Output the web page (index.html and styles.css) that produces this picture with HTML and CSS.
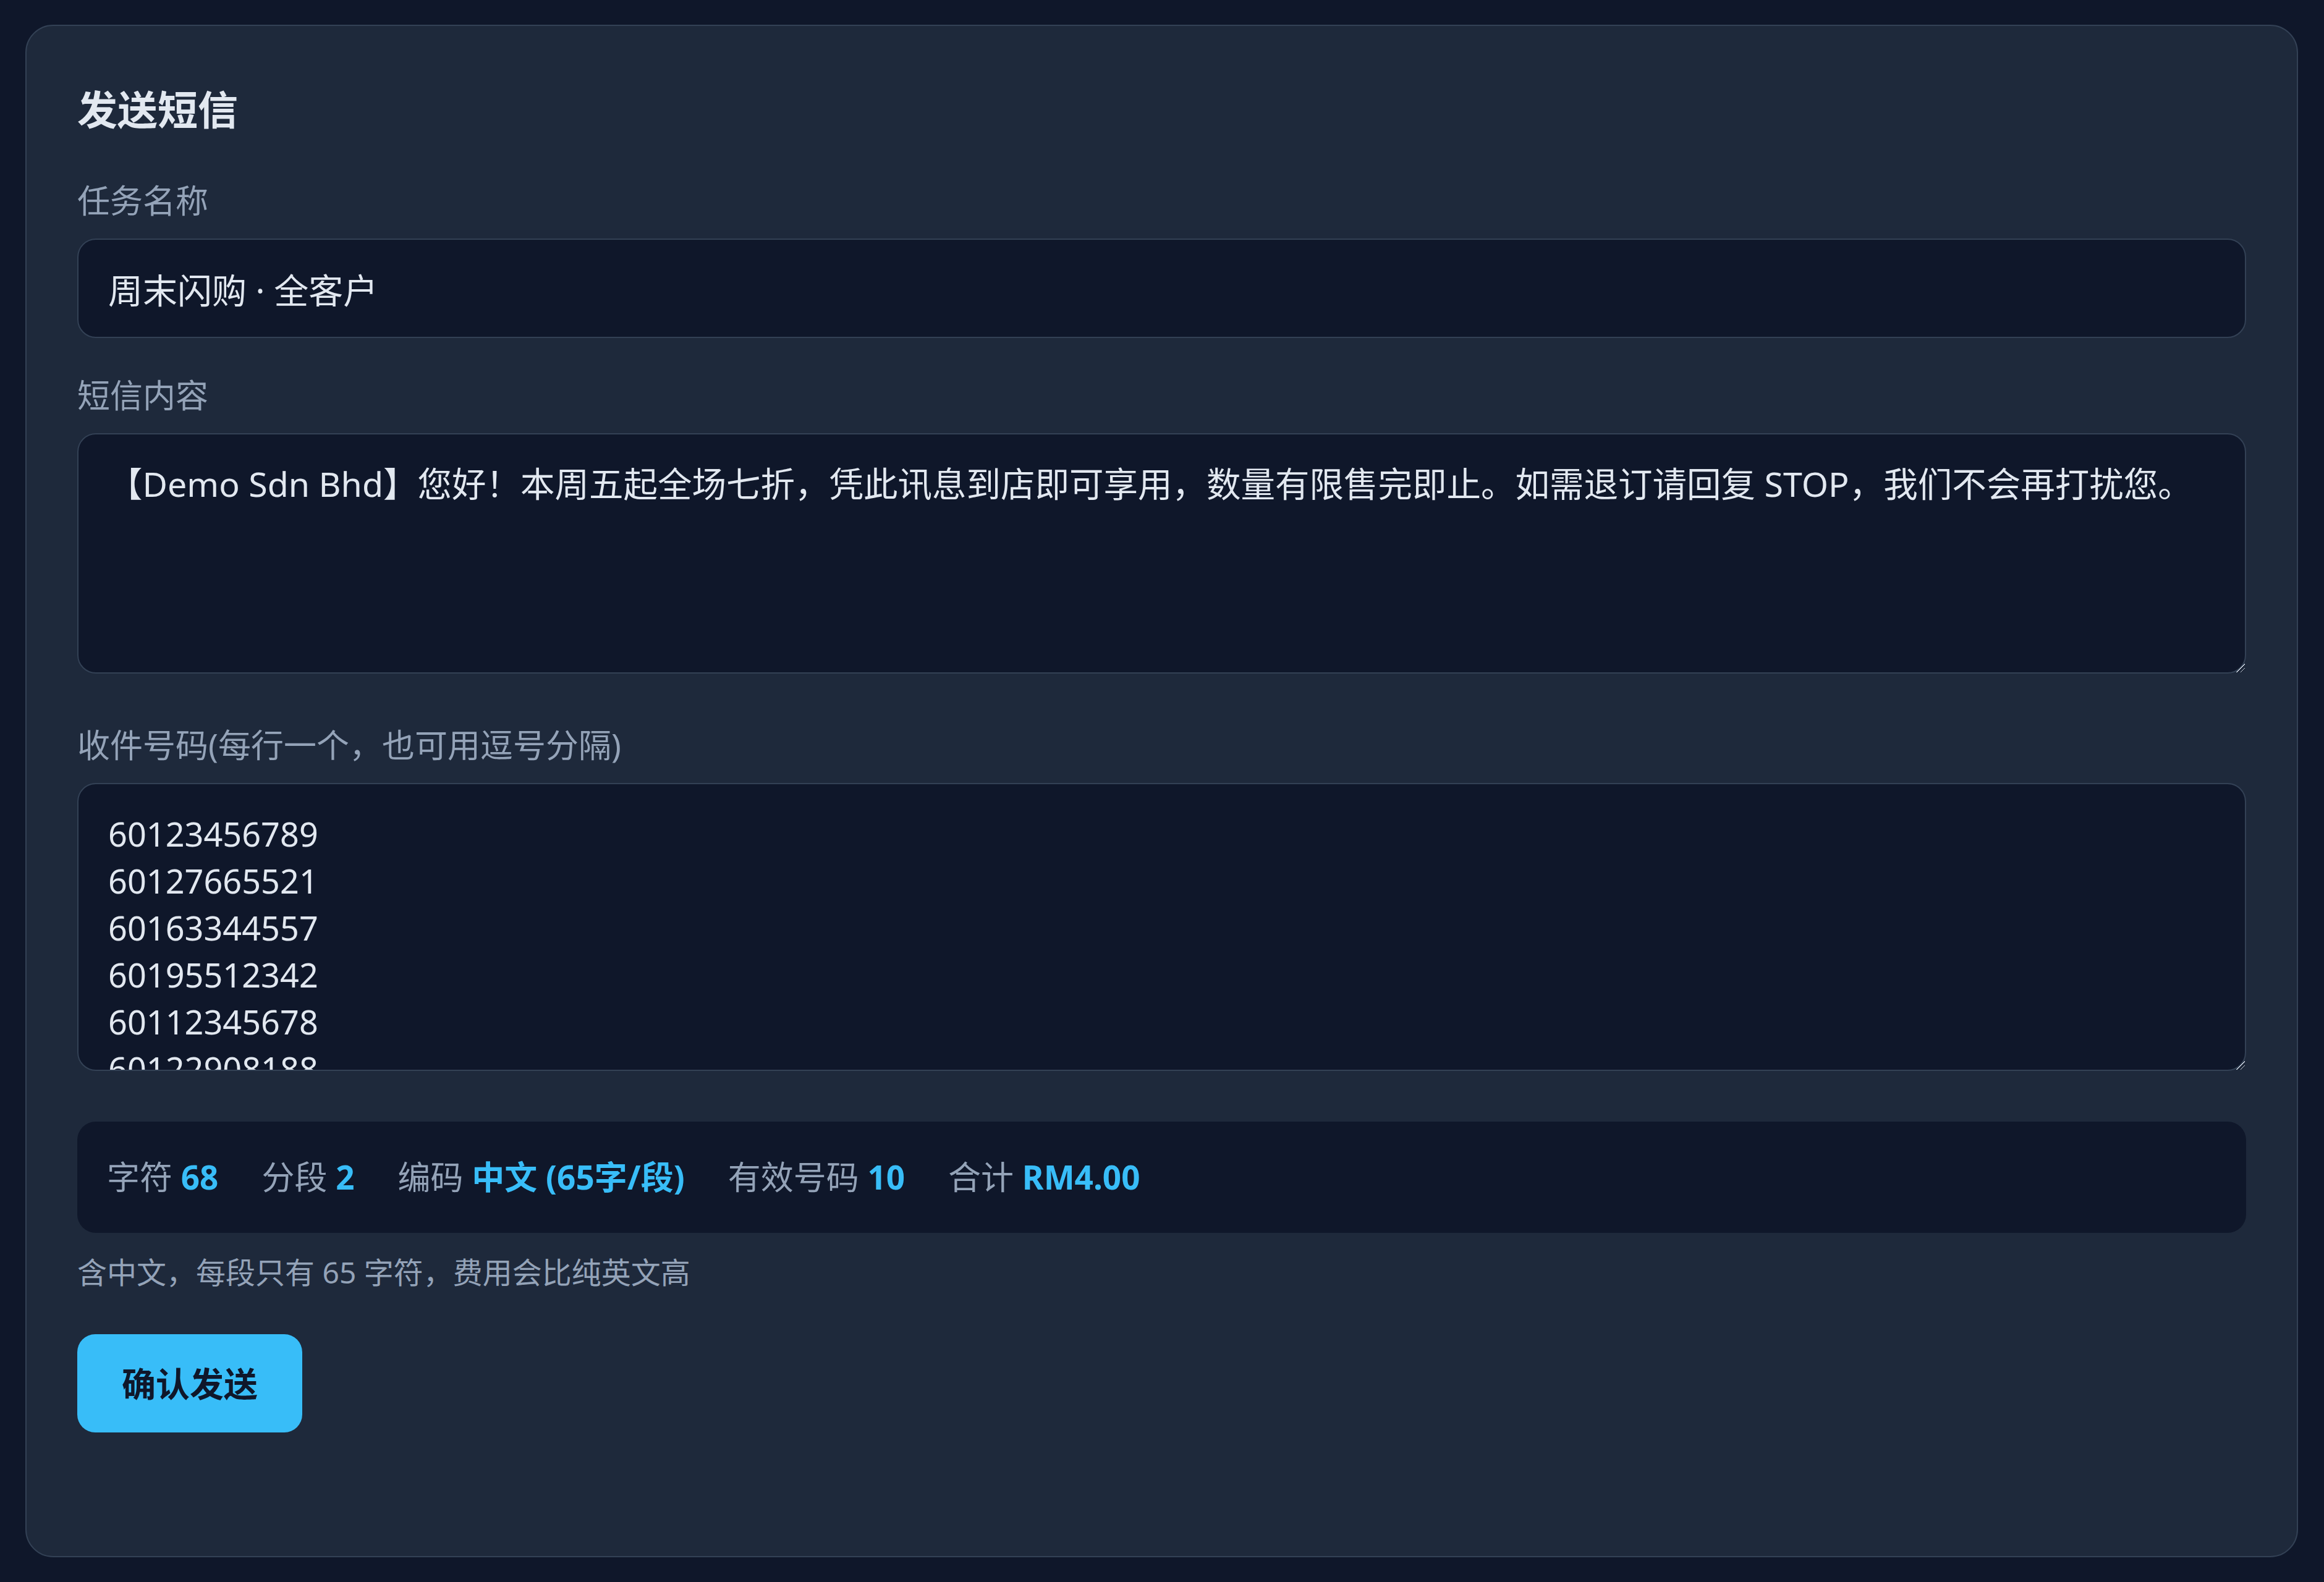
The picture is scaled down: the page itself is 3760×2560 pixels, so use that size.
FILE: index.html
```html
<!DOCTYPE html>
<html lang="zh-CN">
<head>
<meta charset="utf-8">
<title>发送短信</title>
<link rel="stylesheet" href="styles.css">
</head>
<body>
<main class="page">
  <section class="card">
    <h2 class="card-title">发送短信</h2>

    <div class="field field-task">
      <label class="field-label" for="task">任务名称</label>
      <input class="input" id="task" type="text" value="周末闪购 · 全客户">
    </div>

    <div class="field field-message">
      <label class="field-label" for="msg">短信内容</label>
      <textarea class="textarea textarea-message" id="msg">【Demo Sdn Bhd】您好！本周五起全场七折，凭此讯息到店即可享用，数量有限售完即止。如需退订请回复 STOP，我们不会再打扰您。</textarea>
    </div>

    <div class="field field-recipients">
      <label class="field-label" for="phones">收件号码(每行一个，也可用逗号分隔)</label>
      <textarea class="textarea textarea-phones" id="phones">60123456789
60127665521
60163344557
60195512342
60112345678
60122908188
60133456721
60167788990
60191234567
60104455667</textarea>
    </div>

    <div class="stats">
      <span class="stat">字符 <b class="stat-value">68</b></span>
      <span class="stat">分段 <b class="stat-value">2</b></span>
      <span class="stat">编码 <b class="stat-value">中文 (65字/段)</b></span>
      <span class="stat">有效号码 <b class="stat-value">10</b></span>
      <span class="stat">合计 <b class="stat-value">RM4.00</b></span>
    </div>

    <p class="hint">含中文，每段只有 65 字符，费用会比纯英文高</p>

    <div class="actions">
      <button class="btn-primary" type="button">确认发送</button>
    </div>
  </section>
</main>
</body>
</html>
```

FILE: styles.css
```css
* {
  box-sizing: border-box;
}

html,
body {
  margin: 0;
  padding: 0;
  background: #0f172a;
}

body {
  font-family: "Noto Sans", "Noto Sans CJK SC", sans-serif;
  color: #e2e8f0;
}

.page {
  padding: 40px 42px 40px 41px;
}

.card {
  background: #1e293b;
  border: 2px solid #334155;
  border-radius: 45px;
  padding: 92px 82px 200px 82px;
}

.card-title {
  margin: 0 0 68px 0;
  font-size: 65px;
  line-height: 86px;
  font-weight: 700;
  color: #e2e8f0;
}

.field-label {
  display: block;
  margin: 0 0 24px 0;
  font-size: 53px;
  line-height: 74px;
  color: #94a3b8;
}

.field-task {
  margin-bottom: 56px;
}

.field-message {
  margin-bottom: 79px;
}

.field-recipients {
  margin-bottom: 82px;
}

.input,
.textarea {
  display: block;
  width: 100%;
  margin: 0;
  font-family: "Noto Sans", "Noto Sans CJK SC", sans-serif;
  color: #e2e8f0;
  background: #0f172a;
  border: 2px solid #334155;
  border-radius: 30px;
  outline: none;
}

.input {
  height: 161px;
  padding: 40px 48px;
  font-size: 56px;
  line-height: 77px;
}

.textarea {
  padding: 42px 48px;
  line-height: 76px;
  overflow: hidden;
  resize: both;
}

.textarea::-webkit-scrollbar {
  width: 30px;
  height: 30px;
  background: transparent;
}

.textarea::-webkit-resizer {
  background: linear-gradient(135deg,
    transparent 0 52%,
    #cbd5e1 52% 57%,
    #020617 57% 61%,
    transparent 61% 74%,
    #cbd5e1 74% 79%,
    #020617 79% 83%,
    transparent 83%);
}

.textarea-message {
  height: 389px;
  font-size: 55.5px;
}

.textarea-phones {
  height: 466px;
  font-size: 54px;
}

.stats {
  display: flex;
  align-items: center;
  gap: 70px;
  height: 180px;
  padding: 0 48px;
  background: #0f172a;
  border-radius: 30px;
  font-size: 53px;
  line-height: 76px;
  color: #94a3b8;
}

.stat {
  white-space: nowrap;
}

.stat-value {
  font-weight: 700;
  color: #38bdf8;
}

.hint {
  margin: 30px 0 66px 0;
  font-size: 48px;
  line-height: 68px;
  color: #94a3b8;
}

.actions {
  display: flex;
}

.btn-primary {
  margin: 0;
  padding: 41px 72px;
  border: none;
  border-radius: 29px;
  background: #38bdf8;
  color: #0f172a;
  font-family: "Noto Sans", "Noto Sans CJK SC", sans-serif;
  font-size: 55px;
  line-height: 77px;
  font-weight: 700;
  cursor: pointer;
}
```
